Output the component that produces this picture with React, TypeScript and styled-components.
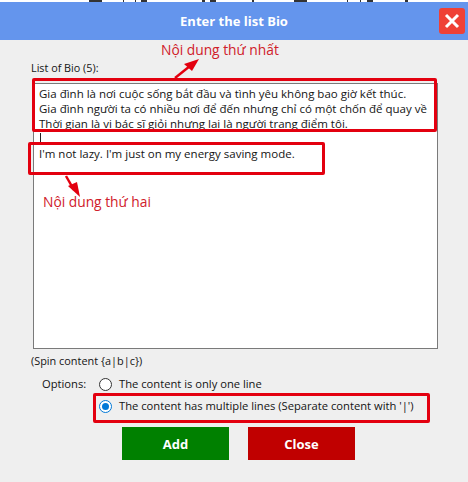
import React from "react";
import styled, { createGlobalStyle } from "styled-components";

const Global = createGlobalStyle`
  html, body { margin: 0; padding: 0; background: #f0f0f0; }
  * { box-sizing: border-box; }
`;

const Page = styled.div`
  position: relative;
  width: 468px;
  height: 482px;
  overflow: hidden;
  background: #efefef;
  font-family: "Open Sans", "Noto Sans", sans-serif;
  font-size: 11.5px;
  color: #141414;
`;

const TopStrip = styled.svg`
  display: block;
  width: 468px;
  height: 2px;
  background: #fff;
`;

const Header = styled.header`
  position: relative;
  height: 38px;
  background: #6495ed;
  display: flex;
  align-items: center;
  justify-content: center;
  color: #fff;
  font: 700 13px "Open Sans", sans-serif;
`;

const CloseX = styled.button`
  position: absolute;
  left: 439px;
  top: 6px;
  width: 26px;
  height: 26px;
  border: 0;
  border-radius: 3px;
  background: #ef4136;
  padding: 0;
  display: flex;
  align-items: center;
  justify-content: center;
`;

const Body = styled.main`
  padding: 20px 31px 0 31px;
  display: flex;
  flex-direction: column;
`;

const ListLabel = styled.label`
  font-size: 10.8px;
  line-height: 16px;
  margin-bottom: 7px;
`;

const TextBox = styled.div`
  margin-left: 2px;
  width: 405px;
  height: 266px;
  background: #fff;
  border: 1px solid #7a7a7a;
  padding: 2px 5px;
  line-height: 15px;
  white-space: pre;
`;

const Caret = styled.div`
  width: 1px;
  height: 10px;
  background: #222;
  margin: 2px 0 3px 1px;
`;

const Spin = styled.div`
  font-size: 10.9px;
  margin-top: 4px;
  line-height: 16px;
`;

const OptionGrid = styled.div`
  font-size: 11.2px;
  margin-top: 7px;
  display: grid;
  grid-template-columns: 57px 1fr;
  padding-left: 11px;
  row-gap: 6px;
  align-items: center;
`;

const OptionLabel = styled.span`
  line-height: 16px;
`;

const Option = styled.label`
  display: flex;
  align-items: center;
  gap: 7px;
  line-height: 16px;
  white-space: nowrap;
`;

const Radio = styled.span<{ $on?: boolean }>`
  width: 13px;
  height: 13px;
  border-radius: 50%;
  background: #fff;
  border: 1px solid ${(p) => (p.$on ? "#0078d7" : "#333")};
  display: flex;
  align-items: center;
  justify-content: center;
  &::after {
    content: "";
    display: ${(p) => (p.$on ? "block" : "none")};
    width: 7px;
    height: 7px;
    border-radius: 50%;
    background: #0078d7;
  }
`;

const Actions = styled.div`
  margin-top: 13px;
  margin-left: 91px;
  display: flex;
  gap: 19px;
`;

const ActionButton = styled.button<{ $bg: string }>`
  width: 107px;
  height: 33px;
  border: 0;
  background: ${(p) => p.$bg};
  color: #fff;
  font: 700 13px "Open Sans", sans-serif;
`;

const Note = styled.div<{ $x: number; $y: number }>`
  position: absolute;
  left: ${(p) => p.$x}px;
  top: ${(p) => p.$y}px;
  color: #d0202a;
  font: 13.8px "Open Sans", sans-serif;
  line-height: 20px;
  white-space: nowrap;
`;

const Mark = styled.div<{ $x: number; $y: number; $w: number; $h: number }>`
  position: absolute;
  left: ${(p) => p.$x}px;
  top: ${(p) => p.$y}px;
  width: ${(p) => p.$w}px;
  height: ${(p) => p.$h}px;
  border: 3px solid #e3000f;
  border-radius: 2px;
`;

const Overlay = styled.svg`
  position: absolute;
  left: 0;
  top: 0;
  pointer-events: none;
`;

export default function App() {
  return (
    <Page>
      <Global />
      <TopStrip viewBox="0 0 468 2">
        <path
          d="M89 0h13v2h-13z M123 0h1v2h-1z M135 0h1v2h-1z M141 0h6v2h-6z M202 0h3v2h-3z M210 0h6v2h-6z M252 0h2v2h-2z M294 0h13v2h-13z M347 0h1v2h-1z M360 0h1v2h-1z M367 0h6v2h-6z M405 0h3v2h-3z"
          fill="#333"
        />
      </TopStrip>
      <Header>
        Enter the list Bio
        <CloseX aria-label="Close">
          <svg width="16" height="16" viewBox="0 0 16 16">
            <path d="M2 2 L14 14 M14 2 L2 14" stroke="#fff" strokeWidth="3" />
          </svg>
        </CloseX>
      </Header>
      <Body>
        <ListLabel>List of Bio (5):</ListLabel>
        <TextBox>
          {"Gia đình là nơi cuộc sống bắt đầu và tình yêu không bao giờ kết thúc.\nGia đình người ta có nhiều nơi để đến nhưng chỉ có một chốn để quay về\nThời gian là vị bác sĩ giỏi nhưng lại là người trang điểm tôi."}
          <Caret />
          {"I'm not lazy. I'm just on my energy saving mode."}
        </TextBox>
        <Spin>(Spin content {"{a|b|c}"})</Spin>
        <OptionGrid>
          <OptionLabel>Options:</OptionLabel>
          <Option>
            <Radio />
            The content is only one line
          </Option>
          <span />
          <Option>
            <Radio $on />
            The content has multiple lines (Separate content with '|')
          </Option>
        </OptionGrid>
        <Actions>
          <ActionButton $bg="#008000">Add</ActionButton>
          <ActionButton $bg="#c00000">Close</ActionButton>
        </Actions>
      </Body>
      <Note $x={161} $y={40}>Nội dung thứ nhất</Note>
      <Note $x={43} $y={192}>Nội dung thứ hai</Note>
      <Mark $x={32} $y={78} $w={405} $h={54} />
      <Mark $x={28} $y={142} $w={297} $h={33} />
      <Mark $x={93} $y={393} $w={337} $h={30} />
      <Overlay width="468" height="482" viewBox="0 0 468 482">
        <path d="M175 78 L190 66" stroke="#e3000f" strokeWidth="2.5" />
        <path d="M199 59 L184 64 L192 71 Z" fill="#e3000f" />
        <path d="M66 176 L74 190" stroke="#e3000f" strokeWidth="2.5" />
        <path d="M80 197 L68 186 L77 182 Z" fill="#e3000f" />
      </Overlay>
    </Page>
  );
}
